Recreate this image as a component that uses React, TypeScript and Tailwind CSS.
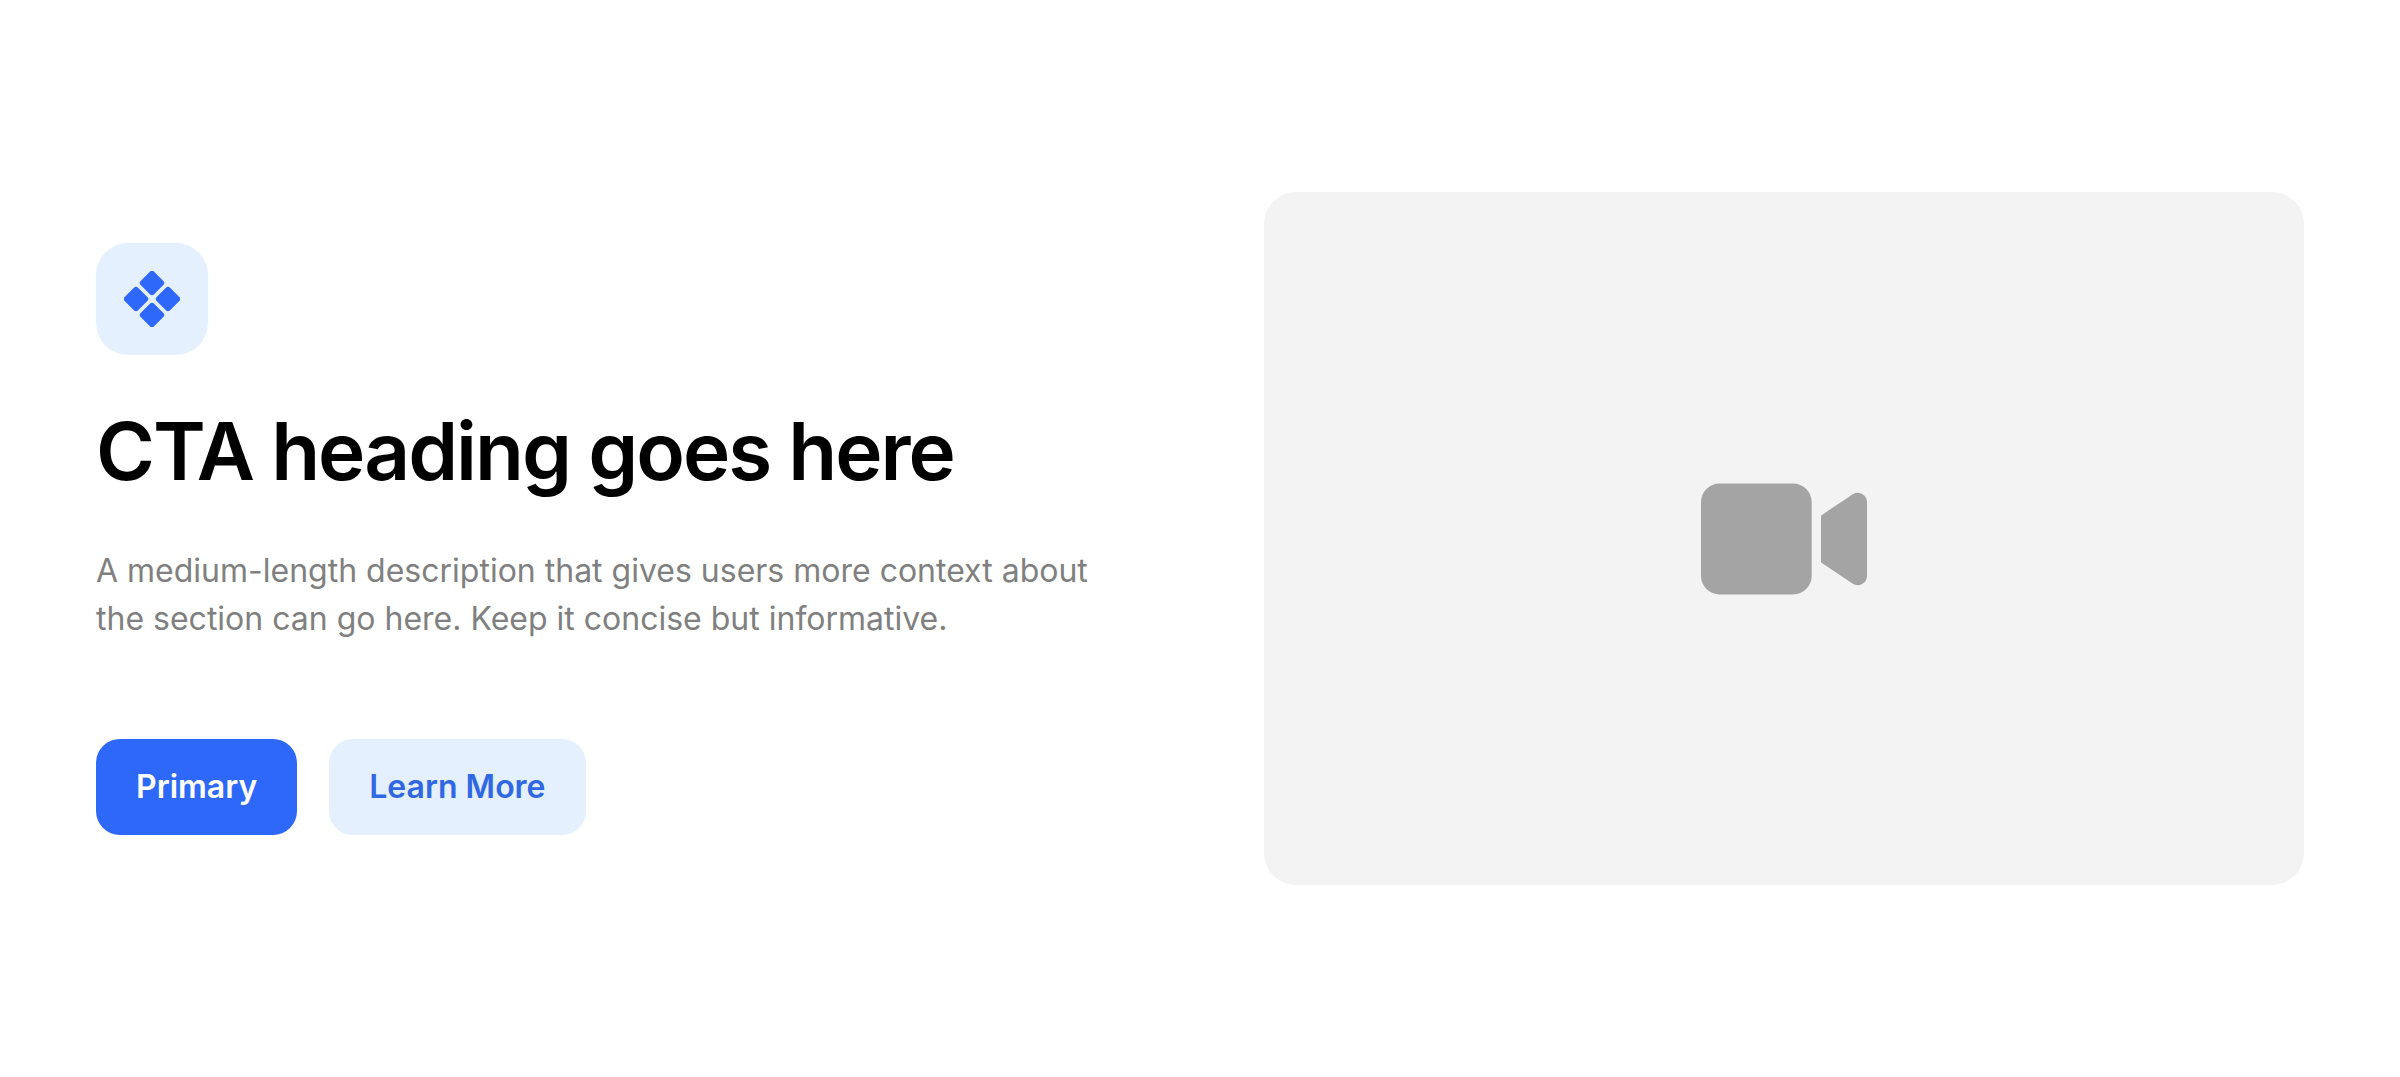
import type { ReactNode } from "react"

function DiamondsIcon() {
  return (
    <svg viewBox="0 0 56 56" className="size-14 fill-[#2d68f8]" aria-hidden="true">
      <rect x="18.5" y="2.5" width="19" height="19" rx="3" transform="rotate(45 28 12)" />
      <rect x="2.5" y="18.5" width="19" height="19" rx="3" transform="rotate(45 12 28)" />
      <rect x="34.5" y="18.5" width="19" height="19" rx="3" transform="rotate(45 44 28)" />
      <rect x="18.5" y="34.5" width="19" height="19" rx="3" transform="rotate(45 28 44)" />
    </svg>
  )
}

function VideoIcon() {
  return (
    <svg viewBox="0 0 166 112" className="h-28 w-[166px] fill-[#a4a4a4]" aria-hidden="true">
      <rect x="0" y="0.5" width="110.7" height="111" rx="18.5" />
      <path d="M120 33.6a2 2 0 0 1 .9-1.7L151.8 11.2a9.3 9.3 0 0 1 14.2 7.7v74.2a9.3 9.3 0 0 1-14.2 7.7L120.9 80.1a2 2 0 0 1-.9-1.7z" />
    </svg>
  )
}

function Button({ className, children }: { className: string; children: ReactNode }) {
  return (
    <button type="button" className={`rounded-3xl px-10 py-6 text-[32px] leading-12 font-semibold ${className}`}>
      {children}
    </button>
  )
}

export default function App() {
  return (
    <main className="min-h-screen bg-white font-['Inter',sans-serif]">
      <section className="grid grid-cols-1 items-center gap-16 px-6 py-16 lg:grid-cols-2 lg:gap-32 lg:px-24 lg:py-48">
        {/* Text column */}
        <div>
          <div className="flex size-28 items-center justify-center rounded-4xl bg-[#e5f0ff]">
            <DiamondsIcon />
          </div>
          <h1 className="mt-12 text-[80px] leading-24 font-semibold tracking-tight text-black">
            CTA heading goes here
          </h1>
          <p className="mt-12 text-[32px] leading-12 text-[#808080]">
            A medium-length description that gives users more context about the section can go here. Keep it concise
            but informative.
          </p>
          <div className="mt-24 flex flex-wrap gap-8">
            <Button className="bg-[#2d68f8] text-white">Primary</Button>
            <Button className="bg-[#e5f0ff] text-[#3067e2]">Learn More</Button>
          </div>
        </div>

        {/* Video placeholder */}
        <div className="flex aspect-3/2 items-center justify-center rounded-4xl bg-[#f3f3f3]">
          <VideoIcon />
        </div>
      </section>
    </main>
  )
}
